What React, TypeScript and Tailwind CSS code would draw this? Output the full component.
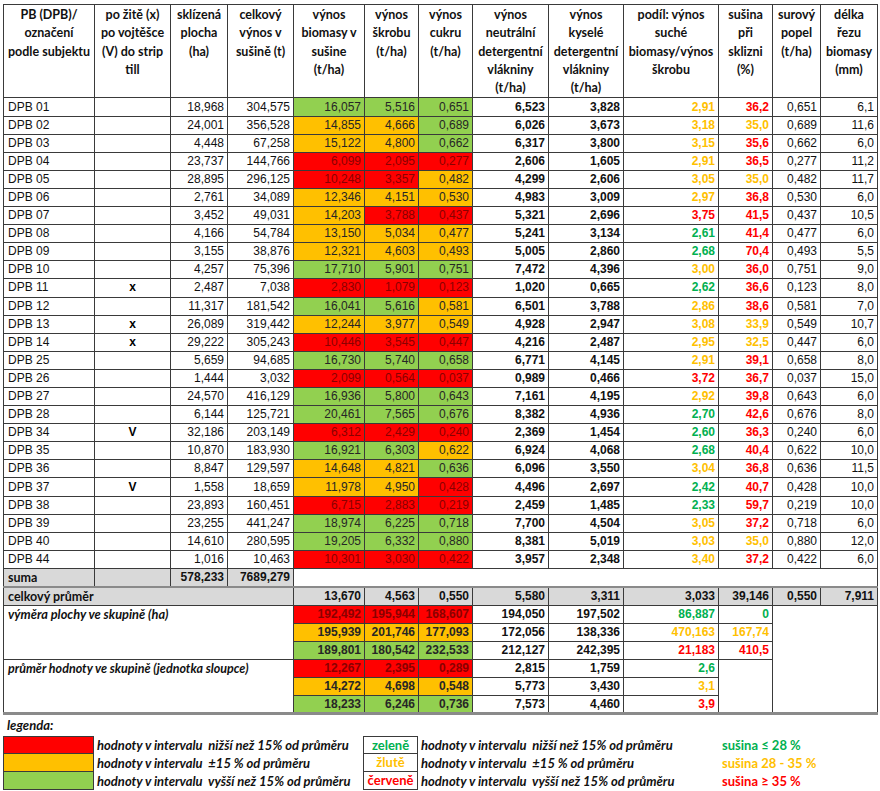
import React from "react";

type Row = string[];

const rows: Row[] = [
  ["DPB 01", "", "18,968", "304,575", "16,057G", "5,516G", "0,651G", "6,523", "3,828", "2,91Y", "36,2R", "0,651", "6,1"],
  ["DPB 02", "", "24,001", "356,528", "14,855O", "4,666O", "0,689G", "6,026", "3,673", "3,18Y", "35,0Y", "0,689", "11,6"],
  ["DPB 03", "", "4,448", "67,258", "15,122O", "4,800O", "0,662G", "6,317", "3,800", "3,15Y", "35,6R", "0,662", "6,0"],
  ["DPB 04", "", "23,737", "144,766", "6,099R", "2,095R", "0,277R", "2,606", "1,605", "2,91Y", "36,5R", "0,277", "11,2"],
  ["DPB 05", "", "28,895", "296,125", "10,248R", "3,357R", "0,482O", "4,299", "2,606", "3,05Y", "35,0Y", "0,482", "11,7"],
  ["DPB 06", "", "2,761", "34,089", "12,346O", "4,151O", "0,530O", "4,983", "3,009", "2,97Y", "36,8R", "0,530", "6,0"],
  ["DPB 07", "", "3,452", "49,031", "14,203O", "3,788R", "0,437R", "5,321", "2,696", "3,75R", "41,5R", "0,437", "10,5"],
  ["DPB 08", "", "4,166", "54,784", "13,150O", "5,034O", "0,477O", "5,241", "3,134", "2,61G", "41,4R", "0,477", "6,0"],
  ["DPB 09", "", "3,155", "38,876", "12,321O", "4,603O", "0,493O", "5,005", "2,860", "2,68G", "70,4R", "0,493", "5,5"],
  ["DPB 10", "", "4,257", "75,396", "17,710G", "5,901G", "0,751G", "7,472", "4,396", "3,00Y", "36,0R", "0,751", "9,0"],
  ["DPB 11", "x", "2,487", "7,038", "2,830R", "1,079R", "0,123R", "1,020", "0,665", "2,62G", "36,6R", "0,123", "8,0"],
  ["DPB 12", "", "11,317", "181,542", "16,041G", "5,616G", "0,581O", "6,501", "3,788", "2,86Y", "38,6R", "0,581", "7,0"],
  ["DPB 13", "x", "26,089", "319,442", "12,244O", "3,977O", "0,549O", "4,928", "2,947", "3,08Y", "33,9Y", "0,549", "10,7"],
  ["DPB 14", "x", "29,222", "305,243", "10,446R", "3,545R", "0,447R", "4,216", "2,487", "2,95Y", "32,5Y", "0,447", "6,0"],
  ["DPB 25", "", "5,659", "94,685", "16,730G", "5,740G", "0,658G", "6,771", "4,145", "2,91Y", "39,1R", "0,658", "8,0"],
  ["DPB 26", "", "1,444", "3,032", "2,099R", "0,564R", "0,037R", "0,989", "0,466", "3,72R", "36,7R", "0,037", "15,0"],
  ["DPB 27", "", "24,570", "416,129", "16,936G", "5,800G", "0,643G", "7,161", "4,195", "2,92Y", "39,8R", "0,643", "6,0"],
  ["DPB 28", "", "6,144", "125,721", "20,461G", "7,565G", "0,676G", "8,382", "4,936", "2,70G", "42,6R", "0,676", "8,0"],
  ["DPB 34", "V", "32,186", "203,149", "6,312R", "2,429R", "0,240R", "2,369", "1,454", "2,60G", "36,3R", "0,240", "6,0"],
  ["DPB 35", "", "10,870", "183,930", "16,921G", "6,303G", "0,622O", "6,924", "4,068", "2,68G", "40,4R", "0,622", "10,0"],
  ["DPB 36", "", "8,847", "129,597", "14,648O", "4,821O", "0,636G", "6,096", "3,550", "3,04Y", "36,8R", "0,636", "11,5"],
  ["DPB 37", "V", "1,558", "18,659", "11,978O", "4,950O", "0,428R", "4,496", "2,697", "2,42G", "40,7R", "0,428", "10,0"],
  ["DPB 38", "", "23,893", "160,451", "6,715R", "2,883R", "0,219R", "2,459", "1,485", "2,33G", "59,7R", "0,219", "10,0"],
  ["DPB 39", "", "23,255", "441,247", "18,974G", "6,225G", "0,718G", "7,700", "4,504", "3,05Y", "37,2R", "0,718", "6,0"],
  ["DPB 40", "", "14,610", "280,595", "19,205G", "6,332G", "0,880G", "8,381", "5,019", "3,03Y", "35,0Y", "0,880", "12,0"],
  ["DPB 44", "", "1,016", "10,463", "10,301R", "3,030R", "0,422R", "3,957", "2,348", "3,40Y", "37,2R", "0,422", "6,0"],
];

const widths = [91, 76, 57, 66, 71, 54, 54, 76, 75, 95, 54, 48, 57];

const headers: string[][] = [
  ["PB (DPB)/", "označení", "podle subjektu"],
  ["po žitě (x)", "po vojtěšce", "(V) do strip", "till"],
  ["sklízená", "plocha", "(ha)"],
  ["celkový", "výnos v", "sušině (t)"],
  ["výnos", "biomasy v", "sušine", "(t/ha)"],
  ["výnos", "škrobu", "(t/ha)"],
  ["výnos", "cukru", "(t/ha)"],
  ["výnos", "neutrální", "detergentní", "vlákniny", "(t/ha)"],
  ["výnos", "kyselé", "detergentní", "vlákniny", "(t/ha)"],
  ["podíl: výnos", "suché", "biomasy/výnos", "škrobu"],
  ["sušina", "při", "sklizni", "(%)"],
  ["surový", "popel", "(t/ha)"],
  ["délka", "řezu", "biomasy", "(mm)"],
];

const B = "border border-[#3a3a3a]";
const fillCls: Record<string, string> = {
  R: "bg-[#ff0000] text-[#8a0000]",
  O: "bg-[#ffc000] text-[#262626]",
  G: "bg-[#92d050] text-[#262626]",
};
const txtCls: Record<string, string> = {
  Y: "text-[#ffc000]",
  G: "text-[#00b050]",
  R: "text-[#ff0000]",
};

function split(v: string): [string, string] {
  const last = v.slice(-1);
  if (/[A-Z]/.test(last) && v.length > 1) return [v.slice(0, -1), last];
  return [v, ""];
}

const num = "font-['Liberation_Sans',Arial,sans-serif] text-[12px] leading-[15px] p-0";
const lbl = "font-['Lato','Liberation_Sans',sans-serif]";

function DataRow({ r }: { r: Row }) {
  return (
    <tr className="h-[18.1px]">
      <td className={`${B} ${num} pl-[4px] text-left text-[#111]`}>{r[0]}</td>
      <td className={`${B} ${num} text-center font-bold`}>{r[1]}</td>
      <td className={`${B} ${num} pr-[3px] text-right text-[#111]`}>{r[2]}</td>
      <td className={`${B} ${num} pr-[3px] text-right text-[#111]`}>{r[3]}</td>
      {[4, 5, 6].map((i) => {
        const [v, c] = split(r[i]);
        return (
          <td key={i} className={`${B} ${num} pr-[3px] text-right ${fillCls[c]}`}>
            {v}
          </td>
        );
      })}
      <td className={`${B} ${num} pr-[3px] text-right font-bold text-[#111]`}>{r[7]}</td>
      <td className={`${B} ${num} pr-[3px] text-right font-bold text-[#111]`}>{r[8]}</td>
      {[9, 10].map((i) => {
        const [v, c] = split(r[i]);
        return (
          <td key={i} className={`${B} ${num} pr-[3px] text-right font-bold ${txtCls[c]}`}>
            {v}
          </td>
        );
      })}
      <td className={`${B} ${num} pr-[3px] text-right text-[#111]`}>{r[11]}</td>
      <td className={`${B} ${num} pr-[3px] text-right text-[#111]`}>{r[12]}</td>
    </tr>
  );
}

function GroupCells({ vals, fill }: { vals: string[]; fill: string }) {
  return (
    <>
      {vals.slice(0, 3).map((v, i) => (
        <td key={i} className={`${B} ${num} pr-[3px] text-right font-bold ${fillCls[fill]}`}>
          {v}
        </td>
      ))}
      <td className={`${B} ${num} pr-[3px] text-right font-bold text-[#111]`}>{vals[3]}</td>
      <td className={`${B} ${num} pr-[3px] text-right font-bold text-[#111]`}>{vals[4]}</td>
    </>
  );
}

export default function App() {
  return (
    <div className="w-[880px] h-[791px] bg-white overflow-hidden">
      <div className="pl-[3px] pt-[4px]">
        <table className="border-collapse table-fixed w-[875px]">
          <colgroup>
            {widths.map((w, i) => (
              <col key={i} style={{ width: w }} />
            ))}
          </colgroup>
          <tbody>
            <tr className="h-[93px]">
              {headers.map((h, i) => (
                <td
                  key={i}
                  className={`${B} ${lbl} align-top text-center font-bold text-[12.5px] leading-[18.3px] whitespace-nowrap text-[#111] pt-[1px] px-0`}
                >
                  {h.map((line, j) => (
                    <div key={j}>{line}</div>
                  ))}
                </td>
              ))}
            </tr>
            {rows.map((r) => (
              <DataRow key={r[0]} r={r} />
            ))}
            <tr className="h-[18.1px]">
              <td className={`${B} ${lbl} bg-[#d9d9d9] pl-[4px] font-bold text-[12.5px] leading-[15px] text-[#111]`}>suma</td>
              <td className={`${B} bg-[#d9d9d9]`}></td>
              <td className={`${B} ${num} bg-[#d9d9d9] pr-[3px] text-right font-bold text-[#111]`}>578,233</td>
              <td className={`${B} ${num} bg-[#d9d9d9] pr-[3px] text-right font-bold text-[#111]`}>7689,279</td>
              <td colSpan={9} className={`${B} border-b-[2px] border-b-[#8a8a8a]`}></td>
            </tr>
            <tr className="h-[19px]">
              <td colSpan={4} className={`${B} border-t-[2px] border-t-[#8a8a8a] ${lbl} bg-[#d9d9d9] pl-[4px] font-bold text-[12.5px] leading-[15px] text-[#111]`}>
                celkový průměr
              </td>
              {["13,670", "4,563", "0,550", "5,580", "3,311", "3,033", "39,146", "0,550", "7,911"].map((v, i) => (
                <td key={i} className={`${B} border-t-[2px] border-t-[#8a8a8a] ${num} bg-[#d9d9d9] pr-[3px] text-right font-bold text-[#111]`}>
                  {v}
                </td>
              ))}
            </tr>
            <tr className="h-[18px]">
              <td rowSpan={3} colSpan={4} className={`${B} ${lbl} align-top pl-[4px] pt-[1px] font-bold italic text-[12.8px] leading-[15px] text-[#111]`}>
                výměra plochy ve skupině (ha)
              </td>
              <GroupCells vals={["192,492", "195,944", "168,607", "194,050", "197,502"]} fill="R" />
              <td className={`${B} ${num} pr-[3px] text-right font-bold ${txtCls.G}`}>86,887</td>
              <td className={`${B} ${num} pr-[3px] text-right font-bold ${txtCls.G}`}>0</td>
              <td rowSpan={6} colSpan={2} className={`${B} border-b-[3px] border-b-[#8a8a8a]`}></td>
            </tr>
            <tr className="h-[18px]">
              <GroupCells vals={["195,939", "201,746", "177,093", "172,056", "138,336"]} fill="O" />
              <td className={`${B} ${num} pr-[3px] text-right font-bold ${txtCls.Y}`}>470,163</td>
              <td className={`${B} ${num} pr-[3px] text-right font-bold ${txtCls.Y}`}>167,74</td>
            </tr>
            <tr className="h-[18px]">
              <GroupCells vals={["189,801", "180,542", "232,533", "212,127", "242,395"]} fill="G" />
              <td className={`${B} ${num} pr-[3px] text-right font-bold ${txtCls.R}`}>21,183</td>
              <td className={`${B} ${num} pr-[3px] text-right font-bold ${txtCls.R}`}>410,5</td>
            </tr>
            <tr className="h-[18px]">
              <td rowSpan={3} colSpan={4} className={`${B} border-b-[3px] border-b-[#8a8a8a] ${lbl} align-top pl-[4px] pt-[1px] font-bold italic text-[12.5px] leading-[15px] text-[#111]`}>
                průměr hodnoty ve skupině (jednotka sloupce)
              </td>
              <GroupCells vals={["12,267", "2,395", "0,289", "2,815", "1,759"]} fill="R" />
              <td className={`${B} ${num} pr-[3px] text-right font-bold ${txtCls.G}`}>2,6</td>
              <td rowSpan={3} className={`${B} border-b-[3px] border-b-[#8a8a8a]`}></td>
            </tr>
            <tr className="h-[18px]">
              <GroupCells vals={["14,272", "4,698", "0,548", "5,773", "3,430"]} fill="O" />
              <td className={`${B} ${num} pr-[3px] text-right font-bold ${txtCls.Y}`}>3,1</td>
            </tr>
            <tr className="h-[18px]">
              {["18,233", "6,246", "0,736"].map((v, i) => (
                <td key={i} className={`${B} border-b-[3px] border-b-[#8a8a8a] ${num} pr-[3px] text-right font-bold ${fillCls.G}`}>
                  {v}
                </td>
              ))}
              <td className={`${B} border-b-[3px] border-b-[#8a8a8a] ${num} pr-[3px] text-right font-bold text-[#111]`}>7,573</td>
              <td className={`${B} border-b-[3px] border-b-[#8a8a8a] ${num} pr-[3px] text-right font-bold text-[#111]`}>4,460</td>
              <td className={`${B} border-b-[3px] border-b-[#8a8a8a] ${num} pr-[3px] text-right font-bold ${txtCls.R}`}>3,9</td>
            </tr>
          </tbody>
        </table>

        <div className={`${lbl} mt-[3px] pl-[4px] text-[13px] font-bold italic leading-[15px] text-[#111]`}>legenda:</div>
        <div className={`${lbl} grid grid-cols-[91px_269px_55px_300px_1fr] text-[13px] font-bold mt-[3px]`}>
          {[
            ["bg-[#ff0000]", "nižší než 15% od průměru", "zeleně", "text-[#00b050]", "sušina ≤ 28 %"],
            ["bg-[#ffc000]", "±15 % od průměru", "žlutě", "text-[#ffc000]", "sušina 28 - 35 %"],
            ["bg-[#92d050]", "vyšší než 15% od průměru", "červeně", "text-[#ff0000]", "sušina ≥ 35 %"],
          ].map((l, i) => (
            <React.Fragment key={i}>
              <div className={`h-[18px] ${l[0]} border border-[#3a3a3a] ${i > 0 ? "border-t-0" : ""}`}></div>
              <div className="h-[18px] pl-[3px] italic leading-[18px] whitespace-pre text-[#111]">
                {"hodnoty v intervalu  " + l[1]}
              </div>
              <div className={`h-[18px] border border-[#3a3a3a] ${i > 0 ? "border-t-0" : ""} text-center leading-[16px] ${l[3]}`}>
                {l[2]}
              </div>
              <div className="h-[18px] pl-[3px] italic leading-[18px] whitespace-pre text-[#111]">
                {"hodnoty v intervalu  " + l[1]}
              </div>
              <div className={`h-[18px] pl-[4px] leading-[18px] ${l[3]}`}>{l[4]}</div>
            </React.Fragment>
          ))}
        </div>
      </div>
    </div>
  );
}
